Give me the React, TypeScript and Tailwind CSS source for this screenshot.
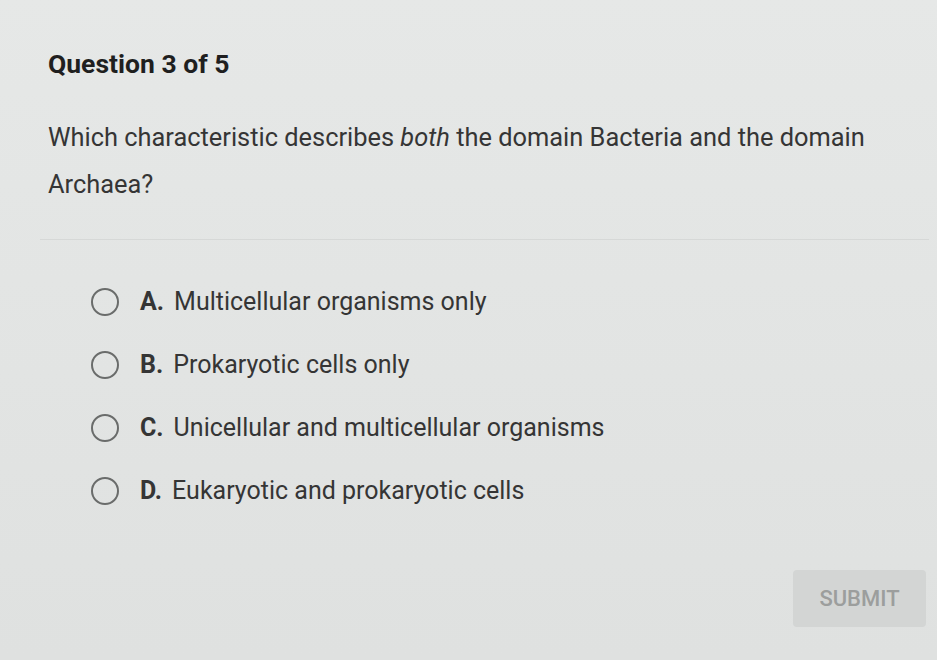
const options = [
  { letter: "A.", text: "Multicellular organisms only" },
  { letter: "B.", text: "Prokaryotic cells only" },
  { letter: "C.", text: "Unicellular and multicellular organisms" },
  { letter: "D.", text: "Eukaryotic and prokaryotic cells" },
];

function Radio() {
  return (
    <span className="block h-[28px] w-[28px] shrink-0 rounded-full border-[2.5px] border-[#6a6c6b]" />
  );
}

export default function App() {
  return (
    <div
      className="flex min-h-screen w-full flex-col bg-gradient-to-b from-[#e6e8e7] to-[#dfe1e0] text-[#2f2f2f]"
      style={{ fontFamily: "Roboto, 'Liberation Sans', sans-serif" }}
    >
      <div className="pl-[48px] pt-[49px]">
        <h1 className="text-[26.5px] font-bold leading-[30px] text-[#1f1f1f]">Question 3 of 5</h1>
        <p className="mt-[35px] pr-[40px] text-[25.4px] leading-[47px] text-[#353535]">
          Which characteristic describes <em>both</em> the domain Bacteria and the domain Archaea?
        </p>
      </div>

      <div className="ml-[40px] mr-[8px] mt-[31px] h-px bg-[#d6d8d7]" />

      <ul className="mt-[30px] flex flex-col">
        {options.map((o) => (
          <li key={o.letter} className="flex h-[63px] items-center pl-[91px]">
            <Radio />
            <span className="ml-[21px] flex items-baseline text-[25px] text-[#353535]">
              <span className="mr-[10px] font-bold">{o.letter}</span>
              <span>{o.text}</span>
            </span>
          </li>
        ))}
      </ul>

      <div className="mt-[48px] flex justify-end pr-[11px]">
        <button className="flex h-[57px] w-[133px] items-center justify-center rounded-[4px] bg-[#d3d5d4] text-[22px] font-medium text-[#9c9e9d]">
          SUBMIT
        </button>
      </div>
    </div>
  );
}
